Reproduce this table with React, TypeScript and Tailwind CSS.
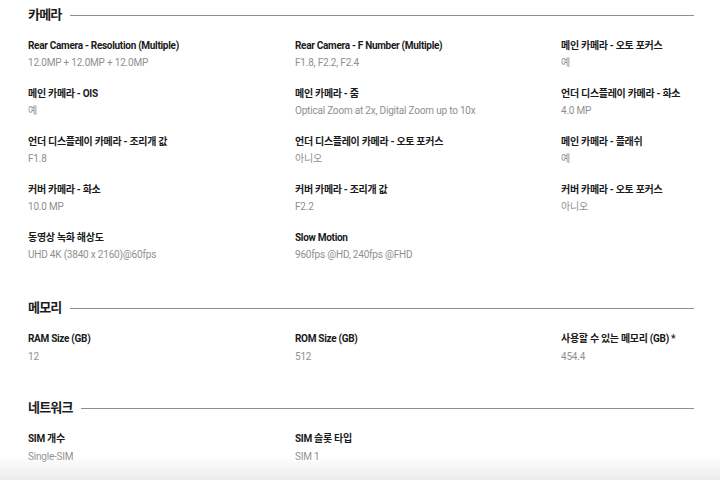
import React from "react";

type Spec = { label: string; value: string };

const sections: { title: string; items: Spec[] }[] = [
  {
    title: "카메라",
    items: [
      { label: "Rear Camera - Resolution (Multiple)", value: "12.0MP + 12.0MP + 12.0MP" },
      { label: "Rear Camera - F Number (Multiple)", value: "F1.8, F2.2, F2.4" },
      { label: "메인 카메라 - 오토 포커스", value: "예" },
      { label: "메인 카메라 - OIS", value: "예" },
      { label: "메인 카메라 - 줌", value: "Optical Zoom at 2x, Digital Zoom up to 10x" },
      { label: "언더 디스플레이 카메라 - 화소", value: "4.0 MP" },
      { label: "언더 디스플레이 카메라 - 조리개 값", value: "F1.8" },
      { label: "언더 디스플레이 카메라 - 오토 포커스", value: "아니오" },
      { label: "메인 카메라 - 플래쉬", value: "예" },
      { label: "커버 카메라 - 화소", value: "10.0 MP" },
      { label: "커버 카메라 - 조리개 값", value: "F2.2" },
      { label: "커버 카메라 - 오토 포커스", value: "아니오" },
      { label: "동영상 녹화 해상도", value: "UHD 4K (3840 x 2160)@60fps" },
      { label: "Slow Motion", value: "960fps @HD, 240fps @FHD" },
    ],
  },
  {
    title: "메모리",
    items: [
      { label: "RAM Size (GB)", value: "12" },
      { label: "ROM Size (GB)", value: "512" },
      { label: "사용할 수 있는 메모리 (GB) *", value: "454.4" },
    ],
  },
  {
    title: "네트워크",
    items: [
      { label: "SIM 개수", value: "Single-SIM" },
      { label: "SIM 슬롯 타입", value: "SIM 1" },
    ],
  },
];

export default function App() {
  return (
    <div
      className="relative w-[720px] h-[480px] overflow-hidden bg-white"
      style={{ fontFamily: 'Roboto, "Noto Sans CJK KR", sans-serif' }}
    >
      <div className="pl-[28px] pt-[5px] w-[694px]">
        {sections.map((s, i) => (
          <section key={s.title} className={i === 0 ? "mb-[36px]" : "mb-[34px]"}>
            <div className="flex items-center gap-[8px] h-[20px]">
              <h3 className="text-[13px] font-bold text-[#1c1c1c] tracking-[-0.06em] leading-[20px]">{s.title}</h3>
              <div className="flex-1 h-px bg-[#8f8f8f]" />
            </div>
            <div className="grid grid-cols-[267px_266px_1fr] gap-y-[17px] mt-[14px]">
              {s.items.map((it) => (
                <div key={it.label}>
                  <div className="text-[10px] font-bold text-[#1a1a1a] leading-[14px] tracking-[-0.03em] whitespace-nowrap">{it.label}</div>
                  <div className={`${i === 0 ? "mt-[3px]" : "mt-[4px]"} text-[10px] text-[#8f8f8f] leading-[14px] tracking-[-0.02em] whitespace-nowrap`}>{it.value}</div>
                </div>
              ))}
            </div>
          </section>
        ))}
      </div>
      <div className="absolute bottom-0 left-0 right-0 h-[24px] bg-gradient-to-b from-white/0 to-[#ececec]" />
    </div>
  );
}
